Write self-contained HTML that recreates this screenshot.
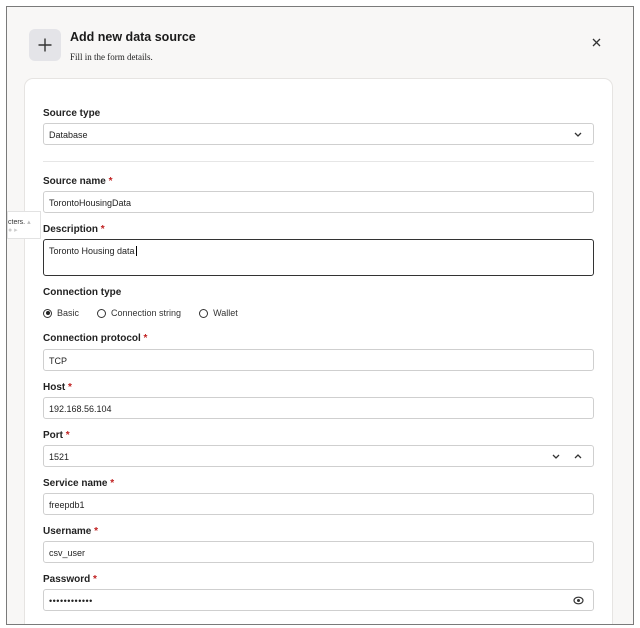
<!DOCTYPE html>
<html><head><style>
*{box-sizing:border-box;margin:0;padding:0}
body{width:640px;height:628px;background:#fff;font-family:"Liberation Sans",sans-serif;position:relative;overflow:hidden}
.frame{position:absolute;left:6px;top:6px;width:628px;height:619px;border:1px solid #7a7a7a;background:#f8f7f6;overflow:hidden}
.card{position:absolute;left:17px;top:71px;width:589px;height:546px;background:#fff;border:1px solid #e6e4e2;border-bottom:none;border-radius:9px 9px 0 0}
.plus{position:absolute;left:22px;top:22px;width:32px;height:32px;background:#e4e4e8;border-radius:6px}
.title{position:absolute;left:63px;top:23px;font-size:12.5px;font-weight:bold;color:#1a1a1a}
.sub{position:absolute;left:63px;top:45px;font-family:"Liberation Serif",serif;font-size:9px;color:#222}
.lbl{position:absolute;left:36px;font-size:10px;font-weight:bold;color:#222}
.lbl b{color:#c02020;font-weight:bold}
.in{position:absolute;left:36px;width:551px;height:22px;border:1px solid #cfcfcf;border-radius:3px;font-size:9px;color:#222;padding:6px 5px;background:#fff}
.tip{position:absolute;left:0;top:204px;width:34px;height:28px;background:#fff;border:1px solid #e2e2e2;font-size:7px;color:#333;padding:6px 0 0 0}
</style></head><body>
<div class="frame">
<div class="plus"><svg width="32" height="32"><path d="M16 9.5V22.5M9.5 16H22.5" stroke="#333" stroke-width="1.4"/></svg></div>
<div class="title">Add new data source</div>
<div class="sub">Fill in the form details.</div>
<svg style="position:absolute;left:585px;top:31px" width="9" height="9"><path d="M1 1L8 8M8 1L1 8" stroke="#333" stroke-width="1.3"/></svg>
<div class="card"></div>
<div class="lbl" style="top:101px">Source type</div>
<div class="in" style="top:116px">Database<svg style="position:absolute;right:11px;top:8px" width="8" height="5"><path d="M1 1L4 4L7 1" stroke="#333" stroke-width="1.3" fill="none"/></svg></div>
<div style="position:absolute;left:36px;top:154px;width:551px;height:1px;background:#e6e6e6"></div>
<div class="lbl" style="top:169px">Source name <b>*</b></div>
<div class="in" style="top:184px">TorontoHousingData</div>
<div class="lbl" style="top:217px">Description <b>*</b></div>
<div class="in" style="top:232px;height:37px;border-color:#333">Toronto Housing data<span style="border-left:1px solid #000;margin-left:1px"></span></div>
<div class="lbl" style="top:280px">Connection type</div>
<div style="position:absolute;left:36px;top:301px;font-size:9px;color:#333;display:flex;align-items:center">
<span style="width:9px;height:9px;border:1px solid #333;border-radius:50%;display:inline-block;position:relative"><span style="position:absolute;left:1.5px;top:1.5px;width:4px;height:4px;background:#222;border-radius:50%"></span></span><span style="margin:0 0 0 5px">Basic</span>
<span style="width:9px;height:9px;border:1px solid #333;border-radius:50%;display:inline-block;margin-left:18px"></span><span style="margin-left:5px">Connection string</span>
<span style="width:9px;height:9px;border:1px solid #333;border-radius:50%;display:inline-block;margin-left:18px"></span><span style="margin-left:5px">Wallet</span></div>
<div class="lbl" style="top:326px">Connection protocol <b>*</b></div>
<div class="in" style="top:342px">TCP</div>
<div class="lbl" style="top:375px">Host <b>*</b></div>
<div class="in" style="top:390px">192.168.56.104</div>
<div class="lbl" style="top:423px">Port <b>*</b></div>
<div class="in" style="top:438px">1521<svg style="position:absolute;right:33px;top:8px" width="8" height="5"><path d="M1 1L4 4L7 1" stroke="#333" stroke-width="1.3" fill="none"/></svg><svg style="position:absolute;right:11px;top:8px" width="8" height="5"><path d="M1 4L4 1L7 4" stroke="#333" stroke-width="1.3" fill="none"/></svg></div>
<div class="lbl" style="top:471px">Service name <b>*</b></div>
<div class="in" style="top:486px">freepdb1</div>
<div class="lbl" style="top:519px">Username <b>*</b></div>
<div class="in" style="top:534px">csv_user</div>
<div class="lbl" style="top:567px">Password <b>*</b></div>
<div class="in" style="top:582px;letter-spacing:0.5px">••••••••••••<svg style="position:absolute;right:9px;top:6px" width="11" height="9"><ellipse cx="5.5" cy="4.5" rx="4.5" ry="3.3" stroke="#333" stroke-width="1.2" fill="none"/><circle cx="5.5" cy="4.5" r="1.5" fill="#333"/></svg></div>
<div class="tip">cters. <span style="color:#bbb">▴</span><br><span style="color:#ccc">● ▸</span></div>
</div>
</body></html>
